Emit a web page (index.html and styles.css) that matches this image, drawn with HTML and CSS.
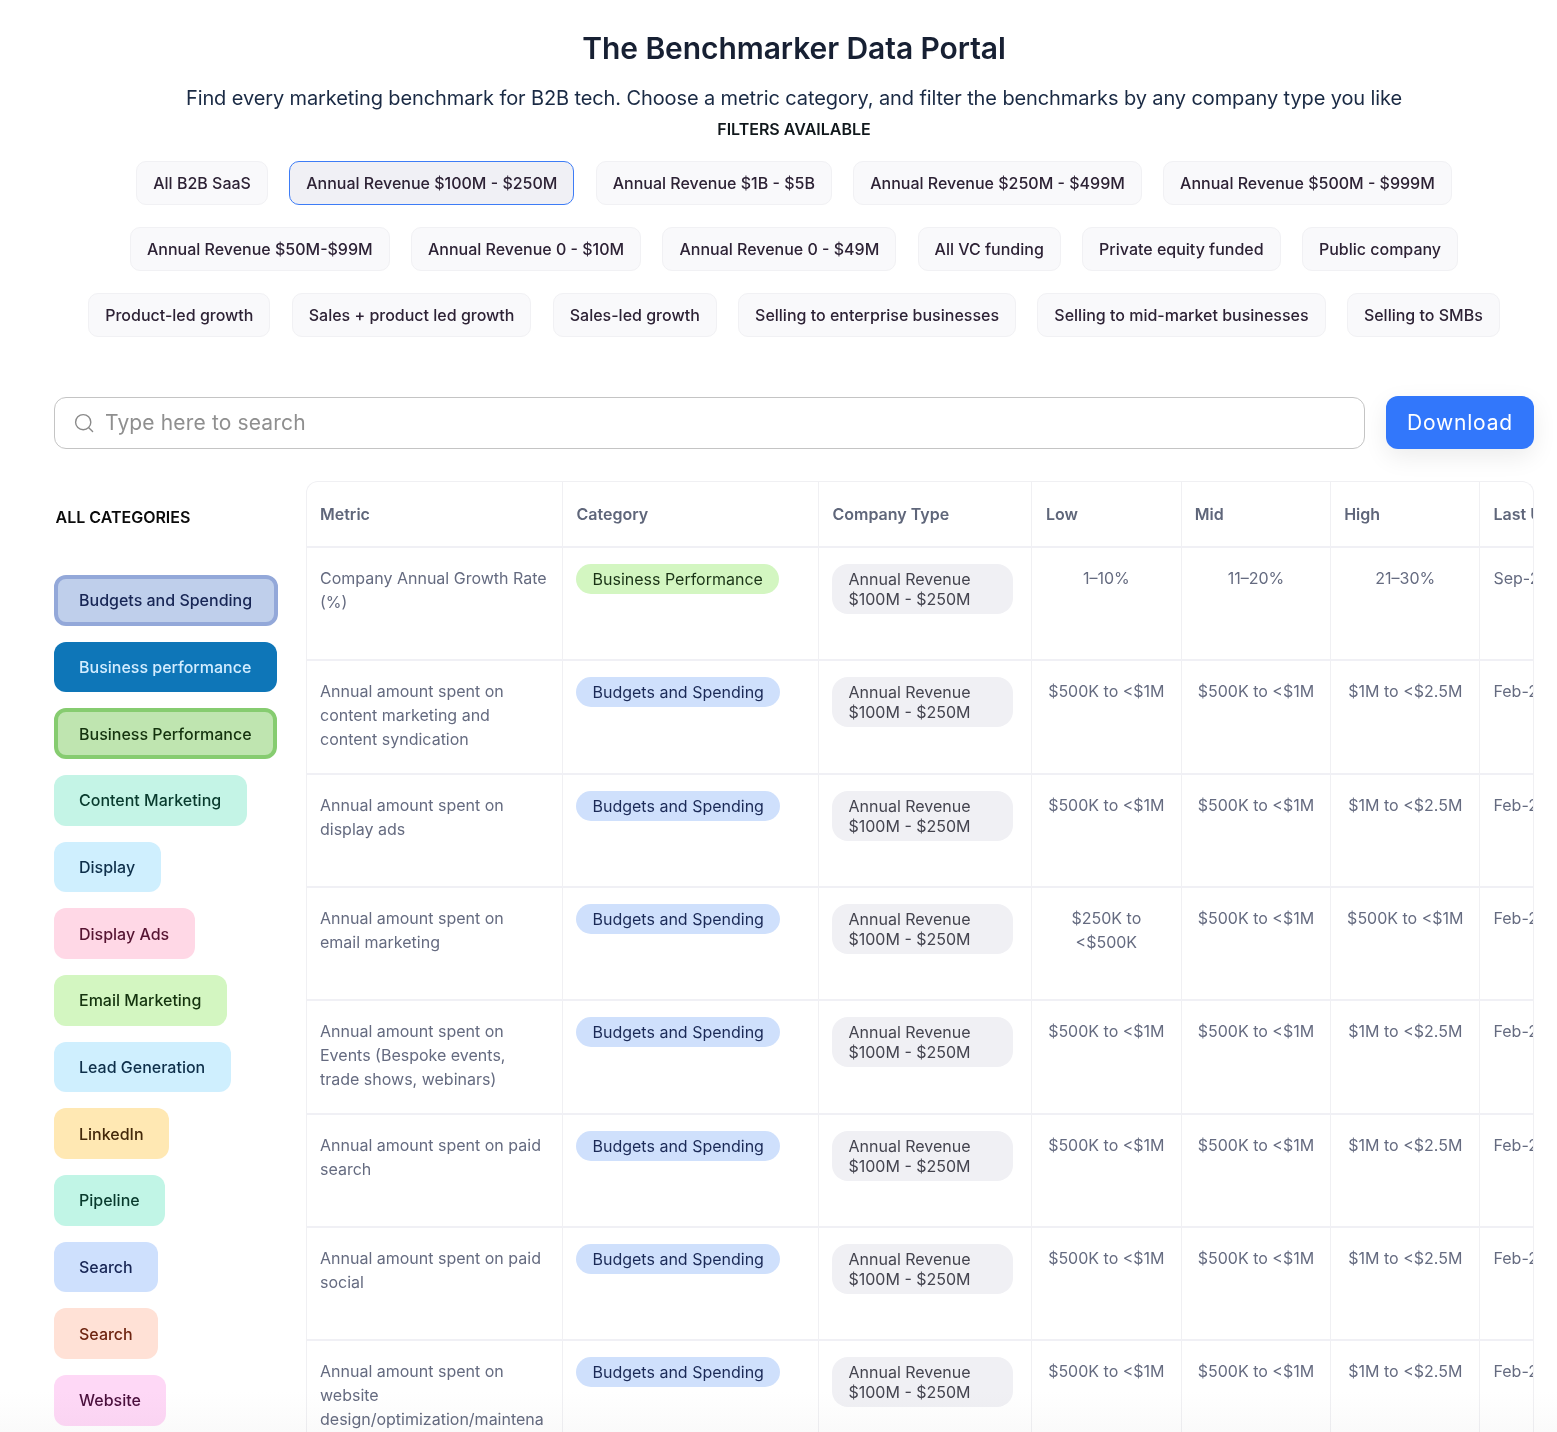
FILE: index.html
```html
<!DOCTYPE html>
<html lang="en">
<head>
<meta charset="utf-8">
<title>The Benchmarker Data Portal</title>
<link rel="stylesheet" href="styles.css">
</head>
<body>
<main class="page">
  <header class="hero">
    <h1>The Benchmarker Data Portal</h1>
    <p class="lead">Find every marketing benchmark for B2B tech. Choose a metric category, and filter the benchmarks by any company type you like</p>
    <h2>FILTERS AVAILABLE</h2>
  </header>
  <div class="filters">
    <button class="filter">All B2B SaaS</button>
    <button class="filter active">Annual Revenue $100M - $250M</button>
    <button class="filter">Annual Revenue $1B - $5B</button>
    <button class="filter">Annual Revenue $250M - $499M</button>
    <button class="filter">Annual Revenue $500M - $999M</button>
    <button class="filter">Annual Revenue $50M-$99M</button>
    <button class="filter">Annual Revenue 0 - $10M</button>
    <button class="filter">Annual Revenue 0 - $49M</button>
    <button class="filter">All VC funding</button>
    <button class="filter">Private equity funded</button>
    <button class="filter">Public company</button>
    <button class="filter">Product-led growth</button>
    <button class="filter">Sales + product led growth</button>
    <button class="filter">Sales-led growth</button>
    <button class="filter">Selling to enterprise businesses</button>
    <button class="filter">Selling to mid-market businesses</button>
    <button class="filter">Selling to SMBs</button>
  </div>
  <div class="toolbar">
    <label class="search">
      <svg class="search-icon" width="20" height="20" viewBox="0 0 20 20" fill="none" stroke="currentColor" stroke-width="1.4" stroke-linecap="round"><circle cx="9.2" cy="9.2" r="7.6"/><path d="M15 15l3.6 3.6"/></svg>
      <span>Type here to search</span>
    </label>
    <button class="download">Download</button>
  </div>
  <div class="content">
    <aside class="sidebar">
      <h3>ALL CATEGORIES</h3>
      <ul class="cats">
        <li class="cat c-budget sel">Budgets and Spending</li>
        <li class="cat c-bizlow">Business performance</li>
        <li class="cat c-biz sel">Business Performance</li>
        <li class="cat c-content">Content Marketing</li>
        <li class="cat c-display">Display</li>
        <li class="cat c-ads">Display Ads</li>
        <li class="cat c-email">Email Marketing</li>
        <li class="cat c-lead">Lead Generation</li>
        <li class="cat c-li">LinkedIn</li>
        <li class="cat c-pipe">Pipeline</li>
        <li class="cat c-search">Search</li>
        <li class="cat c-search2">Search</li>
        <li class="cat c-web">Website</li>
      </ul>
    </aside>
    <div class="table-wrap">
      <table>
        <colgroup><col class="w-metric"><col class="w-cat"><col class="w-type"><col class="w-val-a"><col class="w-val-b"><col class="w-val-c"><col class="w-date"></colgroup>
        <thead>
          <tr><th>Metric</th><th>Category</th><th>Company Type</th><th>Low</th><th class="th-tight">Mid</th><th class="th-tight">High</th><th class="th-tight">Last Updated</th></tr>
        </thead>
        <tbody>
          <tr><td>Company Annual Growth Rate (%)</td><td><span class="pill p-green">Business Performance</span></td><td><span class="type">Annual Revenue $100M - $250M</span></td><td class="val">1–10%</td><td class="val">11–20%</td><td class="val">21–30%</td><td>Sep-2024</td></tr>
          <tr><td>Annual amount spent on content marketing and content syndication</td><td><span class="pill">Budgets and Spending</span></td><td><span class="type">Annual Revenue $100M - $250M</span></td><td class="val">$500K to &lt;$1M</td><td class="val">$500K to &lt;$1M</td><td class="val">$1M to &lt;$2.5M</td><td>Feb-2024</td></tr>
          <tr><td>Annual amount spent on display ads</td><td><span class="pill">Budgets and Spending</span></td><td><span class="type">Annual Revenue $100M - $250M</span></td><td class="val">$500K to &lt;$1M</td><td class="val">$500K to &lt;$1M</td><td class="val">$1M to &lt;$2.5M</td><td>Feb-2024</td></tr>
          <tr><td>Annual amount spent on email marketing</td><td><span class="pill">Budgets and Spending</span></td><td><span class="type">Annual Revenue $100M - $250M</span></td><td class="val">$250K to &lt;$500K</td><td class="val">$500K to &lt;$1M</td><td class="val">$500K to &lt;$1M</td><td>Feb-2024</td></tr>
          <tr><td>Annual amount spent on Events (Bespoke events, trade shows, webinars)</td><td><span class="pill">Budgets and Spending</span></td><td><span class="type">Annual Revenue $100M - $250M</span></td><td class="val">$500K to &lt;$1M</td><td class="val">$500K to &lt;$1M</td><td class="val">$1M to &lt;$2.5M</td><td>Feb-2024</td></tr>
          <tr><td>Annual amount spent on paid search</td><td><span class="pill">Budgets and Spending</span></td><td><span class="type">Annual Revenue $100M - $250M</span></td><td class="val">$500K to &lt;$1M</td><td class="val">$500K to &lt;$1M</td><td class="val">$1M to &lt;$2.5M</td><td>Feb-2024</td></tr>
          <tr><td>Annual amount spent on paid social</td><td><span class="pill">Budgets and Spending</span></td><td><span class="type">Annual Revenue $100M - $250M</span></td><td class="val">$500K to &lt;$1M</td><td class="val">$500K to &lt;$1M</td><td class="val">$1M to &lt;$2.5M</td><td>Feb-2024</td></tr>
          <tr><td>Annual amount spent on website design/optimization/maintenance</td><td><span class="pill">Budgets and Spending</span></td><td><span class="type">Annual Revenue $100M - $250M</span></td><td class="val">$500K to &lt;$1M</td><td class="val">$500K to &lt;$1M</td><td class="val">$1M to &lt;$2.5M</td><td>Feb-2024</td></tr>
        </tbody>
      </table>
    </div>
  </div>
  <div class="fade"></div>
</main>
</body>
</html>
```
FILE: styles.css
```css
* { box-sizing: border-box; }
html, body { margin: 0; height: 100%; overflow: hidden; background: #fff; }
body { font-family: Inter, "Liberation Sans", sans-serif; color: #11181c; }
.page { position: relative; height: 1432px; overflow: hidden; padding: 30px 23px 0 54px; }
.hero { text-align: center; }
h1 { margin: 0; font-size: 30px; line-height: 36px; font-weight: 600; color: #172033; letter-spacing: -.07px; }
.lead { margin: 18px 0 0; font-size: 20px; line-height: 28px; color: #1a2a44; letter-spacing: -.11px; }
h2 { margin: 5px 0 0; font-size: 16px; line-height: 24px; font-weight: 600; color: #11181c; }
.filters { display: flex; flex-wrap: wrap; justify-content: center; gap: 22px 21.3px; margin: 20px 0 0; }
.filter { height: 44px; padding: 0 16px; border: 1px solid #f1f1f4; border-radius: 10px; background: #f9f9fb; color: #2d2235; font: 450 16px/24px Inter, sans-serif; }
.filter.active { background: #f0f0f5; border-color: #3d7cf6; }
.toolbar { display: flex; gap: 21px; align-items: center; margin-top: 59px; }
.search { flex: 1; height: 52px; display: flex; align-items: center; gap: 11px; padding: 0 19px; border: 1px solid #c4c4c4; border-radius: 12px; color: #8f8f8f; font-size: 21px; letter-spacing: .15px; }
.search-icon { color: #8a8a8a; flex: none; }
.download { width: 148px; height: 53px; border: 0; border-radius: 12px; background: #3277fb; color: #fff; font: 400 21px/28px Inter, sans-serif; letter-spacing: .8px; box-shadow: 0 8px 24px rgba(0,0,0,.08); }
.content { display: flex; gap: 28px; margin-top: 32px; align-items: flex-start; }
.sidebar { width: 224px; flex: none; }
h3 { margin: 24px 0 0 1.5px; font-size: 16px; line-height: 24px; font-weight: 600; color: #0b0b0b; }
.cats { list-style: none; margin: 46px 0 0; padding: 0; display: flex; flex-direction: column; align-items: flex-start; gap: 16px; }
.cat { height: 50.67px; display: flex; align-items: center; padding: 0 25.5px 0 25px; border-radius: 12px; font-size: 16px; font-weight: 450; line-height: 24px; white-space: nowrap; }
.cat.sel { border: 4px solid; padding: 0 21.5px 0 21px; }
.c-budget { background: #bfcfeb; border-color: #93a8d9 !important; color: #172554; }
.c-bizlow { background: #0e76b8; color: #d3edff; }
.c-biz { background: #bfe5b0; border-color: #86cc70 !important; color: #14330e; }
.c-content { background: #c4f4e6; color: #083a2d; }
.c-display { background: #cfeffe; color: #0e2f4a; }
.c-ads { background: #ffd8e6; color: #561432; }
.c-email { background: #d3f6c1; color: #14330e; }
.c-lead { background: #cfeffe; color: #0e2f4a; }
.c-li { background: #ffe8b3; color: #43280a; }
.c-pipe { background: #c1f5e6; color: #083a2d; }
.c-search { background: #cee0fd; color: #172554; }
.c-search2 { background: #ffe1d6; color: #6e2410; }
.c-web { background: #fed8f6; color: #4a0f3c; }
.table-wrap { flex: 1; min-width: 0; overflow: hidden; border: 1px solid #f0f0f3; border-bottom: 0; border-radius: 12px 12px 0 0; }
table { width: 1289.5px; table-layout: fixed; border-collapse: collapse; font-size: 16px; line-height: 24px; }
.w-metric { width: 255px; }
.w-cat { width: 256px; }
.w-type { width: 213.4px; }
.w-val-a { width: 149.9px; }
.w-val-b { width: 149.4px; }
.w-val-c { width: 149.3px; }
.w-date { width: 116.5px; }
th { height: 65.15px; padding: 0 14px; text-align: left; font-weight: 600; color: #5f667a; border-right: 1px solid #f0f0f3; border-bottom: 2px solid #f0f0f5; }
th.th-tight { padding: 0 13px; }
td { height: 113.33px; padding: 16px 13.5px 0; vertical-align: top; color: #656b80; border-right: 1px solid #f0f0f3; border-bottom: 2px solid #f0f0f5; overflow-wrap: anywhere; }
td:first-child { padding: 18px 14px 0 13px; }
th:first-child { padding: 0 13px; }
th:last-child, td:last-child { border-right: 0; white-space: nowrap; }
td:last-child { padding: 18px 13px 0; }
td.val { text-align: center; padding-top: 18px; }
.pill { display: inline-block; height: 30px; padding: 0 16.5px; border-radius: 15px; background: #cfe0fc; color: #1b2a57; line-height: 30px; white-space: nowrap; }
.p-green { background: #d3f6c1; color: #1a3316; }
.type { display: block; width: 181px; padding: 5px 16.5px; border-radius: 16px; background: #f0f0f4; color: #44444f; line-height: 20px; }
.fade { position: absolute; left: 0; right: 0; bottom: 0; height: 40px; background: linear-gradient(#fff, #fafafa); mix-blend-mode: multiply; pointer-events: none; }
```
